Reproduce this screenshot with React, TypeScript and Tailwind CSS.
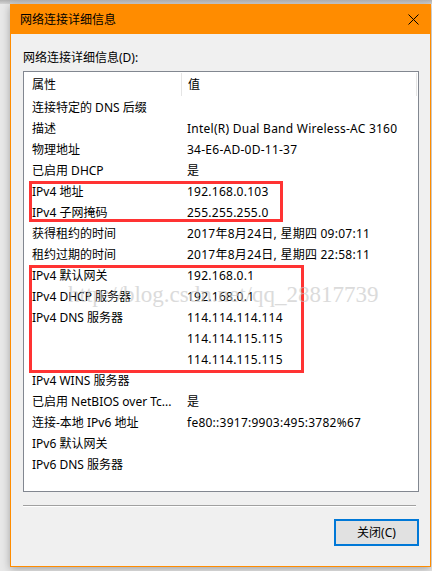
import React from "react";

const rows: [string, string][] = [
  ["连接特定的 DNS 后缀", ""],
  ["描述", "Intel(R) Dual Band Wireless-AC 3160"],
  ["物理地址", "34-E6-AD-0D-11-37"],
  ["已启用 DHCP", "是"],
  ["IPv4 地址", "192.168.0.103"],
  ["IPv4 子网掩码", "255.255.255.0"],
  ["获得租约的时间", "2017年8月24日, 星期四 09:07:11"],
  ["租约过期的时间", "2017年8月24日, 星期四 22:58:11"],
  ["IPv4 默认网关", "192.168.0.1"],
  ["IPv4 DHCP 服务器", "192.168.0.1"],
  ["IPv4 DNS 服务器", "114.114.114.114"],
  ["", "114.114.115.115"],
  ["", "114.114.115.115"],
  ["IPv4 WINS 服务器", ""],
  ["已启用 NetBIOS over Tc...", "是"],
  ["连接-本地 IPv6 地址", "fe80::3917:9903:495:3782%67"],
  ["IPv6 默认网关", ""],
  ["IPv6 DNS 服务器", ""],
];

export default function App() {
  return (
    <div className="relative h-[571px] w-[432px] overflow-hidden bg-[linear-gradient(to_bottom,#b0b0b0_0px,#d4d4d4_4px,#e8e8e8_4px)] font-['Noto_Sans','Noto_Sans_CJK_SC',sans-serif] text-[12px] text-black">
      <div className="ml-[10px] mt-[4px] flex h-[563px] w-[421px] flex-col border border-[#ff8c00] bg-[#f0f0f0] shadow-[0_2px_8px_rgba(0,0,0,0.3)]">
        {/* title bar */}
        <div className="flex h-[29px] items-center justify-between bg-[#ff8c00] pl-[9px] pr-[11px]">
          <span className="leading-[16px]">网络连接详细信息</span>
          <svg width="11" height="11" viewBox="0 0 11 11">
            <path d="M0.5 0.5 L10.5 10.5 M10.5 0.5 L0.5 10.5" stroke="#000" strokeWidth="1" />
          </svg>
        </div>

        <div className="flex flex-1 flex-col pl-[12px] pr-[11px]">
          <div className="mt-[16px] leading-[16px]">网络连接详细信息(D):</div>

          <div className="mt-[5px] h-[421px] w-[396px] border border-[#828790] bg-white">
            <div className="grid h-[25px] grid-cols-[157px_1fr] items-center">
              <div className="pl-[8px] leading-[16px]">属性</div>
              <div className="mr-[1px] flex h-[23px] items-center border-l border-r border-[#e5e5e5] pl-[6px] leading-[16px]">值</div>
            </div>
            {rows.map(([k, v], i) => (
              <div key={i} className="grid h-[21px] grid-cols-[157px_1fr] items-center leading-[16px]">
                <div className="whitespace-nowrap pl-[8px]">{k}</div>
                <div className="whitespace-nowrap pl-[6px] tracking-[0.25px]">{v}</div>
              </div>
            ))}
          </div>

          <div className="mt-[13px] h-[2px] w-[393px] border-t border-b border-t-[#a0a0a0] border-b-white" />

          <div className="mt-[12px] flex justify-end">
            <button className="flex h-[27px] w-[85px] items-center justify-center border-2 border-[#0078d7] bg-[#e1e1e1] leading-[16px]">
              关闭(C)
            </button>
          </div>
        </div>
      </div>

      {/* annotation boxes */}
      <div className="absolute left-[29px] top-[181px] h-[41px] w-[254px] border-[3px] border-[#ff3333]" />
      <div className="absolute left-[29px] top-[265px] h-[108px] w-[275px] border-[3px] border-[#ff3333]" />

      {/* watermark */}
      <div className="pointer-events-none absolute left-[68px] top-[282px] whitespace-nowrap font-['Liberation_Serif',serif] text-[23px] leading-[26px] text-[#c4c4c4] opacity-60">
        http://blog.csdn.net/qq_28817739
      </div>
    </div>
  );
}
